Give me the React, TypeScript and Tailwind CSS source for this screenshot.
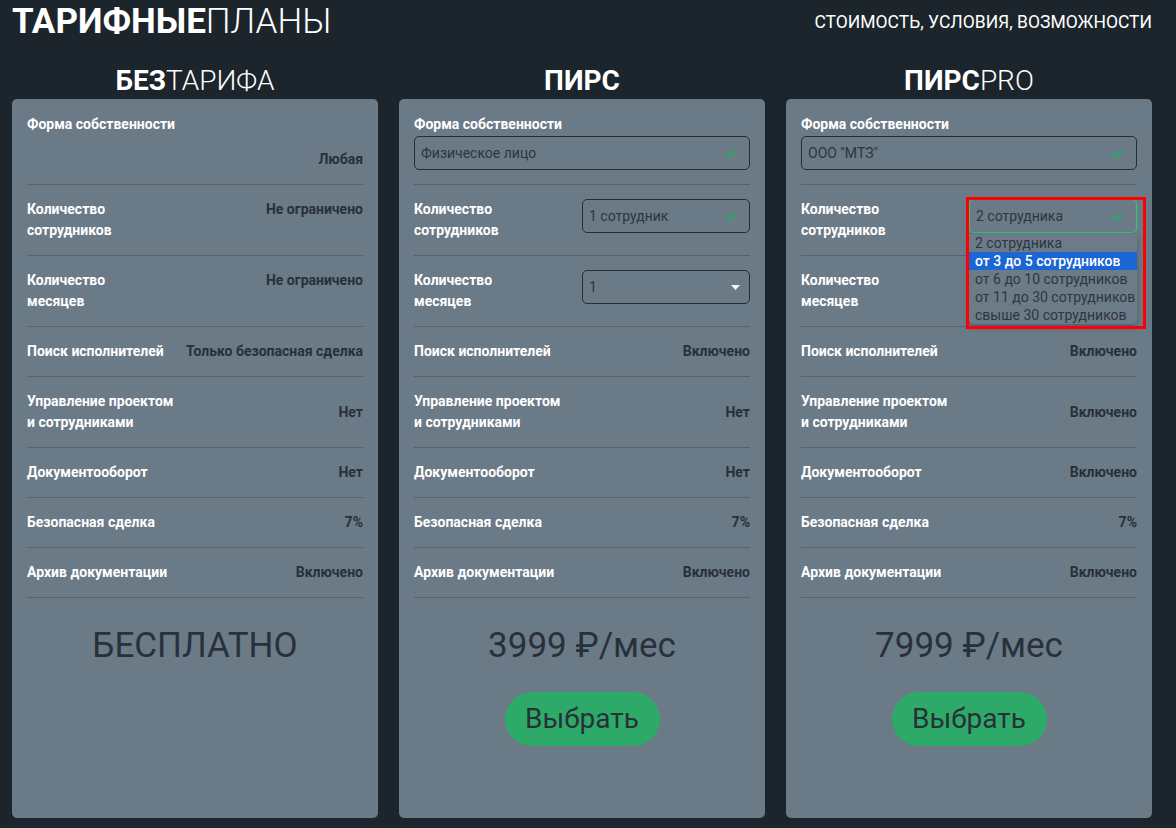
import React from "react";

const Check = () => (
  <svg width="13" height="11" viewBox="0 0 13 11" className="shrink-0">
    <path d="M1.5 5.8 L4.8 9 L11.5 1.8" fill="none" stroke="#2ba866" strokeWidth="2" />
  </svg>
);

const Field = ({ text, focused }: { text: string; focused?: boolean }) => (
  <div
    className={`h-[34px] w-full rounded-[5px] border flex items-center justify-between pl-[6px] pr-[12px] text-[14px] text-[#2c3640] ${
      focused ? "border-[#3cbf73] shadow-[0_0_0_2px_rgba(46,170,104,0.25)]" : "border-[#252e36]"
    }`}
  >
    <span>{text}</span>
    <Check />
  </div>
);

const Select = ({ text }: { text: string }) => (
  <div className="h-[34px] w-full rounded-[5px] border border-[#252e36] flex items-center justify-between pl-[6px] pr-[9px] text-[14px] text-[#2c3640]">
    <span>{text}</span>
    <svg width="9" height="5" viewBox="0 0 9 5">
      <path d="M0 0 H9 L4.5 5 Z" fill="#f3f4f6" />
    </svg>
  </div>
);

const Label = ({ children }: { children: React.ReactNode }) => (
  <div className="text-[14px] font-bold leading-[21px] text-white">{children}</div>
);

const Value = ({ children }: { children: React.ReactNode }) => (
  <div className="text-[14px] font-bold leading-[21px] text-[#27303a] text-right">{children}</div>
);

const options = [
  "2 сотрудника",
  "от 3 до 5 сотрудников",
  "от 6 до 10 сотрудников",
  "от 11 до 30 сотрудников",
  "свыше 30 сотрудников",
];

const two = (a: string, b: string) => (
  <>
    {a}
    <br />
    {b}
  </>
);

const common = (search: string, manage: string, docs: string) => [
  { label: "Поиск исполнителей", value: search, center: false },
  { label: two("Управление проектом", "и сотрудниками"), value: manage, center: true },
  { label: "Документооборот", value: docs, center: false },
  { label: "Безопасная сделка", value: "7%", center: false },
  { label: "Архив документации", value: "Включено", center: false },
];

const Plan = ({
  bold,
  light,
  form,
  staff,
  months,
  rest,
  price,
  button,
  dropdown,
}: {
  bold: string;
  light: string;
  form: React.ReactNode;
  staff: React.ReactNode;
  months: React.ReactNode;
  rest: { label: React.ReactNode; value: string; center: boolean }[];
  price: string;
  button?: boolean;
  dropdown?: boolean;
}) => (
  <div className="flex flex-col">
    <div className="h-[55px] pt-[20px] text-center text-[28px] leading-[34px] text-white">
      <span className="font-bold">{bold}</span>
      <span className="font-light">{light}</span>
    </div>
    <div className="h-[719px] rounded-[5px] bg-[#6b7a87] px-[15px]">
      <div className="border-b border-[#56636e] pt-[15px] pb-[14px]">
        <Label>Форма собственности</Label>
        {form}
      </div>
      <div className="relative flex justify-between border-b border-[#56636e] py-[14px]">
        <Label>{two("Количество", "сотрудников")}</Label>
        {staff}
        {dropdown && (
          <>
            <div className="absolute left-[168px] top-[49px] w-[168px] rounded-b-[5px] bg-[#6c7b88] shadow-[0_3px_6px_rgba(0,0,0,0.25)] z-10">
              {options.map((o, i) => (
                <div
                  key={o}
                  className={`h-[18px] whitespace-nowrap px-[6px] text-[14px] leading-[18px] ${
                    i === 1 ? "bg-[#1b66d4] text-white font-medium" : "text-[#2c3640]"
                  }`}
                >
                  {o}
                </div>
              ))}
            </div>
            <div className="absolute left-[165px] top-[12px] w-[180px] h-[132px] border-[3px] border-[#ff0000] z-20" />
          </>
        )}
      </div>
      <div className="flex justify-between border-b border-[#56636e] py-[14px]">
        <Label>{two("Количество", "месяцев")}</Label>
        {months}
      </div>
      {rest.map((r, i) => (
        <div
          key={i}
          className={`flex justify-between border-b border-[#56636e] py-[14px] ${r.center ? "items-center" : ""}`}
        >
          <Label>{r.label}</Label>
          <Value>{r.value}</Value>
        </div>
      ))}
      <div className="mt-[28px] text-center text-[35px] leading-[40px] text-[#28313a]">{price}</div>
      {button && (
        <div className="mt-[26px] flex justify-center">
          <div className="h-[54px] w-[155px] rounded-full bg-[#2eaa68] flex items-center justify-center text-[28px] text-[#27303a]">
            Выбрать
          </div>
        </div>
      )}
    </div>
  </div>
);

export default function App() {
  return (
    <div className="min-h-[828px] bg-[#1c252b] pl-[12px] pr-[24px] font-['Roboto',sans-serif]">
      <div className="flex h-[44px] items-center justify-between">
        <div className="text-[35px] leading-[44px] text-white">
          <span className="font-bold">ТАРИФНЫЕ</span>
          <span className="font-light">ПЛАНЫ</span>
        </div>
        <div className="text-[17.5px] text-white">СТОИМОСТЬ, УСЛОВИЯ, ВОЗМОЖНОСТИ</div>
      </div>
      <div className="grid grid-cols-3 gap-[21px]">
        <Plan
          bold="БЕЗ"
          light="ТАРИФА"
          form={
            <div className="mt-[14px]">
              <Value>Любая</Value>
            </div>
          }
          staff={<Value>Не ограничено</Value>}
          months={<Value>Не ограничено</Value>}
          rest={common("Только безопасная сделка", "Нет", "Нет")}
          price="БЕСПЛАТНО"
        />
        <Plan
          bold="ПИРС"
          light=""
          form={
            <div className="mt-[1px]">
              <Field text="Физическое лицо" />
            </div>
          }
          staff={
            <div className="w-[168px]">
              <Field text="1 сотрудник" />
            </div>
          }
          months={
            <div className="w-[168px]">
              <Select text="1" />
            </div>
          }
          rest={common("Включено", "Нет", "Нет")}
          price="3999 ₽/мес"
          button
        />
        <Plan
          bold="ПИРС"
          light="PRO"
          form={
            <div className="mt-[1px]">
              <Field text={'ООО "МТЗ"'} />
            </div>
          }
          staff={
            <div className="w-[168px]">
              <Field text="2 сотрудника" focused />
            </div>
          }
          months={<div />}
          rest={common("Включено", "Включено", "Включено")}
          price="7999 ₽/мес"
          button
          dropdown
        />
      </div>
    </div>
  );
}
